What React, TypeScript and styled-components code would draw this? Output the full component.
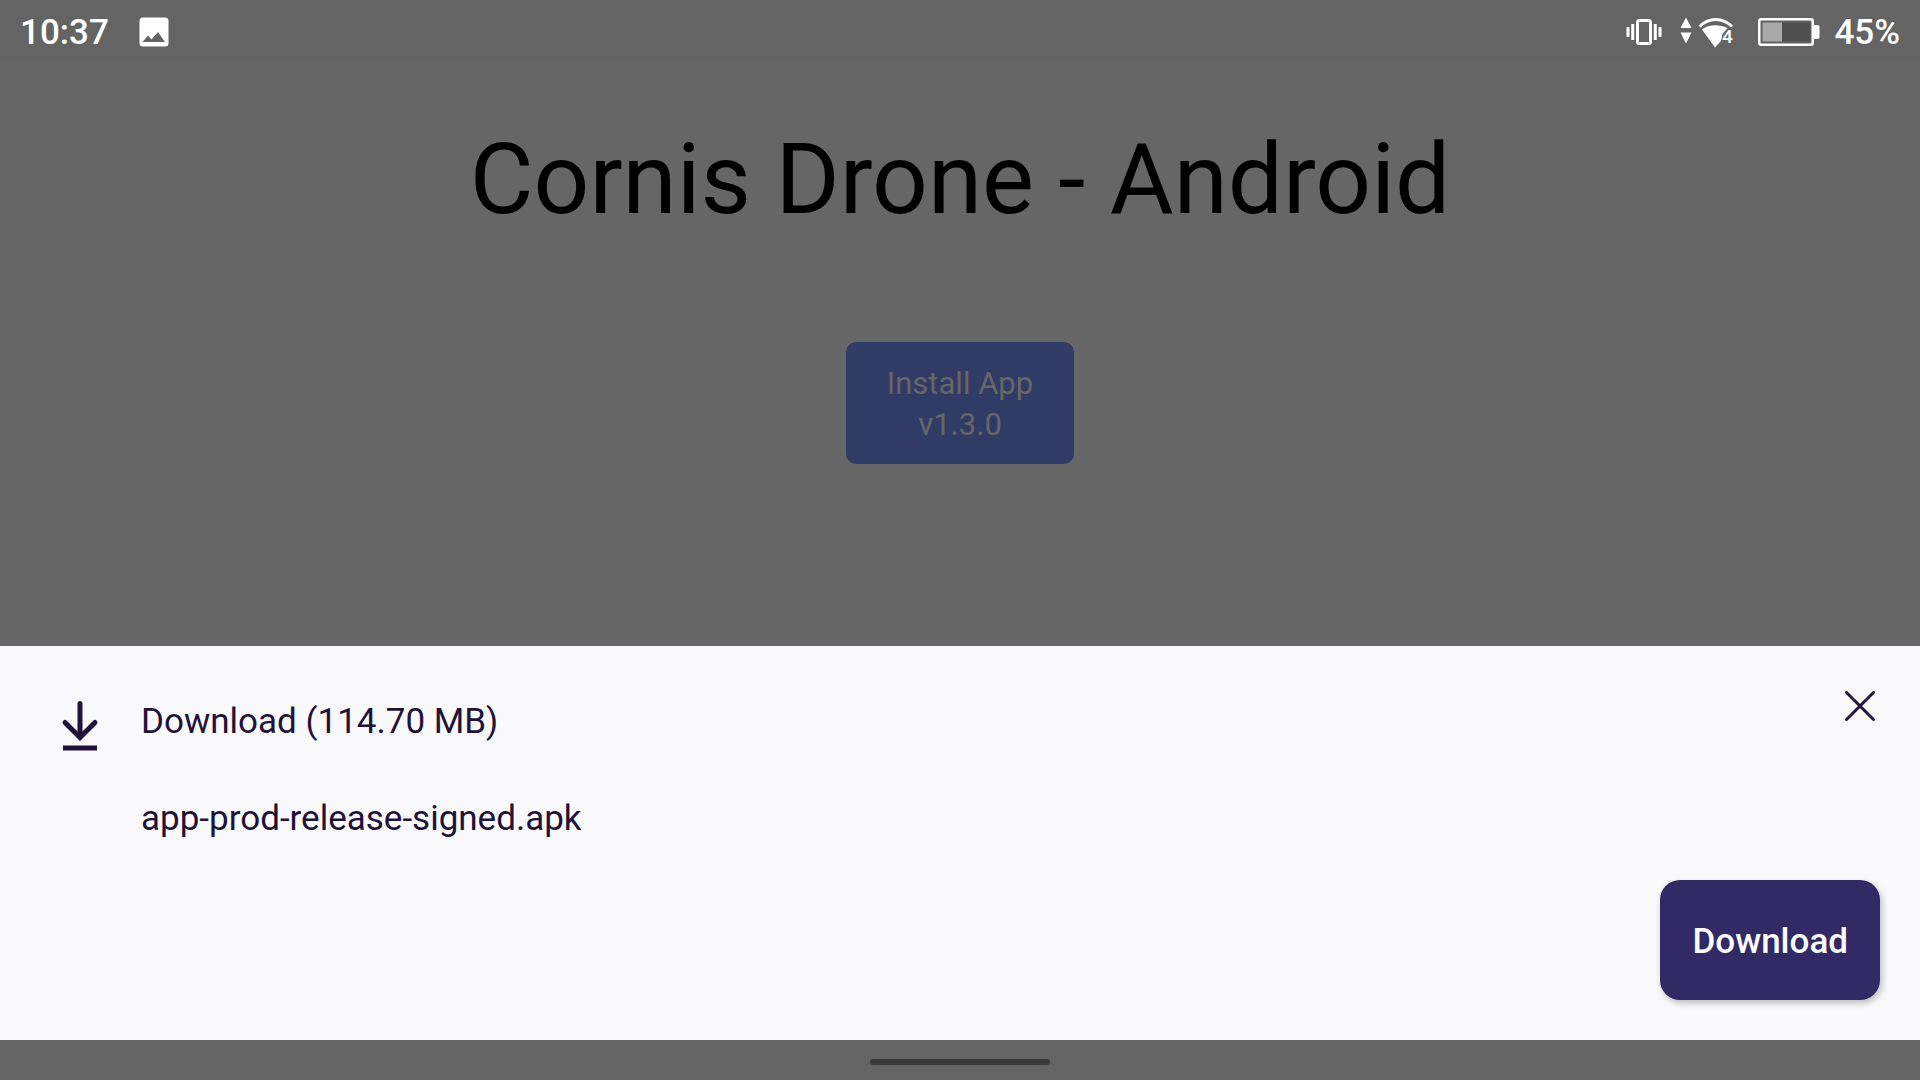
import React from "react";
import styled, { createGlobalStyle } from "styled-components";

const GlobalStyle = createGlobalStyle`
  * { box-sizing: border-box; }
  html, body { margin: 0; padding: 0; }
  body {
    background: #666666;
    font-family: Roboto, "Noto Sans", sans-serif;
  }
  button { font-family: inherit; border: 0; margin: 0; padding: 0; cursor: pointer; }
  h1, h2, p { margin: 0; font-weight: 400; }
  svg { display: block; }
`;

const Screen = styled.div`
  display: flex;
  flex-direction: column;
  min-height: 100vh;
`;

const StatusBar = styled.header`
  display: flex;
  justify-content: space-between;
  align-items: center;
  height: 60px;
  padding: 4px 20px 0;
  background: #646464;
  color: #ffffff;
`;

const StatusGroup = styled.div<{ $gap: number }>`
  display: flex;
  align-items: center;
  gap: ${(p) => p.$gap}px;
`;

const StatusText = styled.span`
  padding-top: 2px;
  font-size: 35px;
  line-height: 44px;
  font-weight: 500;
`;

const Page = styled.main`
  flex: 1;
  display: flex;
  flex-direction: column;
  align-items: center;
  gap: 102px;
  padding: 60px 24px;
`;

const Title = styled.h1`
  font-size: 98px;
  line-height: 120px;
  color: #000000;
`;

const InstallButton = styled.button`
  padding: 21px 41px 19px;
  border-radius: 10px;
  background: #303c66;
  color: #666666;
  font-size: 31px;
  line-height: 41px;
`;

const Line = styled.span`
  display: block;
`;

const Sheet = styled.section`
  display: flex;
  flex-direction: column;
  gap: 39px;
  padding: 40px;
  background: #f9f9fb;
  color: #20123a;
`;

const SheetTop = styled.div`
  display: flex;
  align-items: flex-start;
`;

const DownloadMark = styled.div`
  padding: 14px 41px 0 20px;
`;

const SheetText = styled.div`
  flex: 1;
  display: flex;
  flex-direction: column;
  gap: 53px;
  padding-top: 14px;
`;

const SheetTitle = styled.h2`
  font-size: 35px;
  line-height: 44px;
`;

const FileName = styled.p`
  font-size: 35px;
  line-height: 44px;
`;

const CloseButton = styled.button`
  display: grid;
  place-items: center;
  width: 40px;
  height: 40px;
  background: transparent;
  color: inherit;
`;

const DownloadButton = styled.button`
  align-self: flex-end;
  height: 120px;
  padding: 2px 32px 0;
  border-radius: 20px;
  background: #312a65;
  color: #fbfbfe;
  font-size: 35px;
  font-weight: 500;
  box-shadow: 2px 3px 6px rgba(0, 0, 0, 0.25);
`;

const NavBar = styled.footer`
  display: flex;
  justify-content: center;
  align-items: center;
  height: 40px;
  padding-top: 4px;
  background: #646464;
`;

const HomeHandle = styled.div`
  width: 180px;
  height: 6px;
  border-radius: 3px;
  background: #393939;
`;

const PictureIcon = () => (
  <svg width="30" height="30" viewBox="0 0 30 30" aria-hidden="true">
    <rect x="0.5" y="0.5" width="29" height="29" rx="3.5" fill="#fff" />
    <path d="M3.5 25 9 18.500l3.500 4L19 15l7 10z" fill="#646464" />
  </svg>
);

const VibrateIcon = () => (
  <svg width="36" height="26" viewBox="0 0 36 26" fill="none" stroke="#fff" aria-hidden="true">
    <rect x="11.500" y="1.5" width="13" height="23" rx="2" strokeWidth="3" />
    <path d="M6.700 5v16M29.300 5v16" strokeWidth="3" />
    <path d="M2 8v10M34 8v10" strokeWidth="3" />
  </svg>
);

const WifiIcon = () => (
  <svg width="54" height="32" viewBox="0 0 54 32" aria-hidden="true">
    <path d="M6 1.500 11.500 12H.5zM6 27.500 .5 16.500h11z" fill="#fff" />
    <path d="M19.500 10.500C28.500 1 43 1 52 10.500" fill="none" stroke="#fff" strokeWidth="3" />
    <path d="M22 13.500C29 8.500 38 8 47.500 12L42.500 18 41 25l-6 6.500z" fill="#fff" />
    <text x="42" y="27" fontSize="19" fontWeight="500" fill="#fff" fontFamily="Roboto, sans-serif">4</text>
  </svg>
);

const BatteryIcon = () => (
  <svg width="62" height="28" viewBox="0 0 62 28" aria-hidden="true">
    <path d="M56 7h3.500q2 0 2 2v10q0 2-2 2H56z" fill="#fff" />
    <rect x="1.250" y="1.250" width="53.500" height="25.500" rx="2" fill="#646464" stroke="#fff" strokeWidth="2.500" />
    <rect x="4.500" y="4.500" width="48" height="19" fill="#4f4f4f" />
    <rect x="4.500" y="4.500" width="19.500" height="19" fill="#a9a9a9" />
  </svg>
);

const DownloadIcon = () => (
  <svg width="40" height="52" viewBox="0 0 40 52" fill="none" stroke="#20123a" aria-hidden="true">
    <path d="M20 3.500v34M5 22.500 20 37.500 35 22.500" strokeWidth="5" strokeLinecap="round" />
    <path d="M3 48h34" strokeWidth="5" />
  </svg>
);

const CloseIcon = () => (
  <svg width="30" height="30" viewBox="0 0 30 30" fill="none" stroke="currentColor" aria-hidden="true">
    <path d="m1.500 1.500 27 27m0-27-27 27" strokeWidth="3" strokeLinecap="round" />
  </svg>
);

export default function App() {
  return (
    <Screen>
      <GlobalStyle />
      <StatusBar>
        <StatusGroup $gap={30}>
          <StatusText>10:37</StatusText>
          <PictureIcon />
        </StatusGroup>
        <StatusGroup $gap={14}>
          <StatusGroup $gap={24}>
            <StatusGroup $gap={18}>
              <VibrateIcon />
              <WifiIcon />
            </StatusGroup>
            <BatteryIcon />
          </StatusGroup>
          <StatusText>45%</StatusText>
        </StatusGroup>
      </StatusBar>
      <Page>
        <Title>Cornis Drone - Android</Title>
        <InstallButton type="button">
          <Line>Install App</Line>
          <Line>v1.3.0</Line>
        </InstallButton>
      </Page>
      <Sheet aria-label="Download">
        <SheetTop>
          <DownloadMark>
            <DownloadIcon />
          </DownloadMark>
          <SheetText>
            <SheetTitle>Download (114.70 MB)</SheetTitle>
            <FileName>app-prod-release-signed.apk</FileName>
          </SheetText>
          <CloseButton type="button" aria-label="Close">
            <CloseIcon />
          </CloseButton>
        </SheetTop>
        <DownloadButton type="button">Download</DownloadButton>
      </Sheet>
      <NavBar>
        <HomeHandle />
      </NavBar>
    </Screen>
  );
}
